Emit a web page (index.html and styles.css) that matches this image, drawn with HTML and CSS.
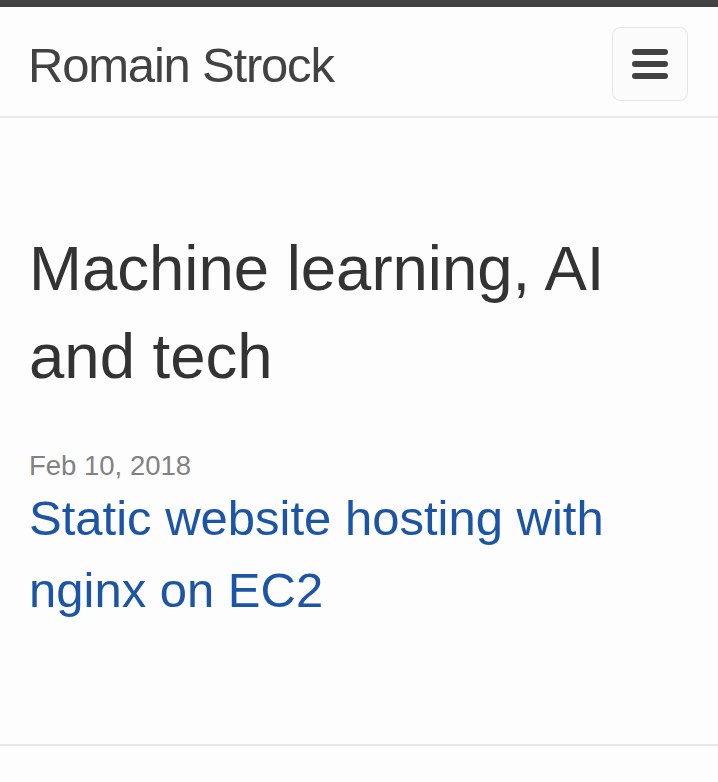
FILE: index.html
```html
<!DOCTYPE html>
<html lang="en">
<head>
<meta charset="utf-8">
<title>Romain Strock</title>
<link rel="stylesheet" href="styles.css">
</head>
<body>
<header class="site-header">
  <div class="wrapper header-inner">
    <a class="site-title" href="#">Romain Strock</a>
    <button class="menu-btn" aria-label="Menu">
      <svg width="36" height="30" viewBox="0 0 36 30" aria-hidden="true">
        <path d="M3 3H33M3 15H33M3 27H33" stroke="#424242" stroke-width="6" stroke-linecap="round" fill="none"/>
      </svg>
    </button>
  </div>
</header>
<main class="page-content">
  <div class="wrapper">
    <h1 class="page-heading">Machine learning, AI and tech</h1>
    <ul class="post-list">
      <li>
        <span class="post-meta">Feb 10, 2018</span>
        <h2 class="post-title"><a class="post-link" href="#">Static website hosting with nginx on EC2</a></h2>
      </li>
    </ul>
  </div>
</main>
<footer class="site-footer"></footer>
</body>
</html>
```

FILE: styles.css
```css
* { box-sizing: border-box; }
html, body {
  margin: 0;
  padding: 0;
  background: #fdfdfd;
  font-family: "Liberation Sans", Arial, Helvetica, sans-serif;
  color: #333333;
}
.wrapper {
  padding: 0 30px 0 29px;
}
.site-header {
  border-top: 7px solid #424242;
  border-bottom: 2px solid #e8e8e8;
}
.header-inner {
  height: 109px;
  display: flex;
  align-items: center;
  justify-content: space-between;
}
.site-title {
  font-size: 49px;
  line-height: 56px;
  padding-top: 7px;
  margin-left: -1px;
  letter-spacing: -1.2px;
  color: #424242;
  text-decoration: none;
}
.menu-btn {
  width: 76px;
  height: 74px;
  margin-top: 5px;
  padding: 0;
  border: 1.5px solid #e6e6e6;
  border-radius: 8px;
  background: #fbfbfb;
  display: flex;
  align-items: center;
  justify-content: center;
}
.menu-btn svg { display: block; }
.page-content {
  padding-top: 106px;
  padding-bottom: 118px;
}
.page-heading {
  margin: 0;
  font-size: 63.5px;
  line-height: 88px;
  font-weight: normal;
  color: #333333;
}
.post-list {
  list-style: none;
  margin: 50px 0 0;
  padding: 0;
}
.post-meta {
  display: block;
  font-size: 27.5px;
  line-height: 32px;
  color: #828282;
}
.post-title {
  margin: 0;
  font-size: 49px;
  line-height: 72px;
  font-weight: normal;
}
.post-link {
  color: #1c55a8;
  text-decoration: none;
}
.site-footer {
  border-top: 2px solid #e8e8e8;
  height: 60px;
}
```
